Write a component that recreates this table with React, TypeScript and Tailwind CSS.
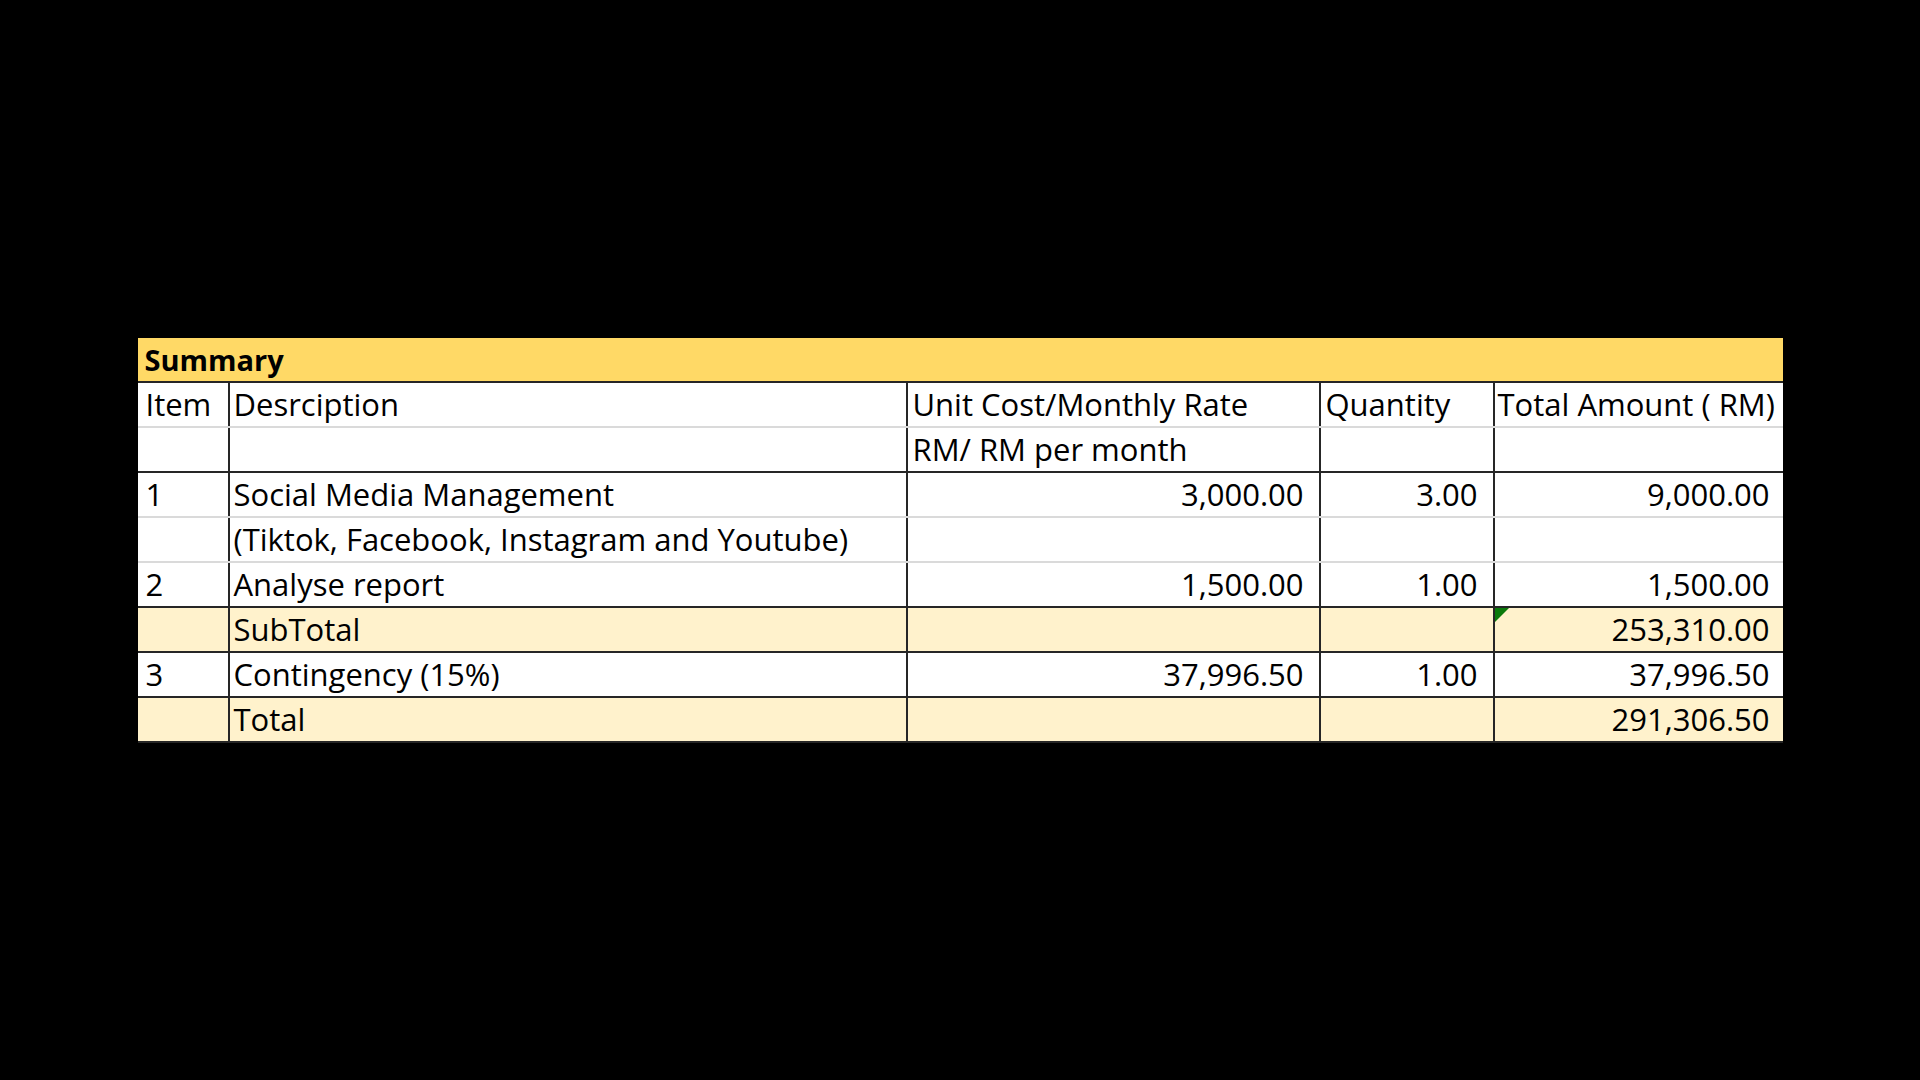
import React from 'react';

type Row = {
  item?: string;
  desc?: string;
  unit?: string;
  qty?: string;
  total?: string;
  line: 'dark' | 'light';
  tint?: boolean;
  flag?: boolean;
};

const rows: Row[] = [
  { item: 'Item', desc: 'Desrciption', unit: 'Unit Cost/Monthly Rate', qty: 'Quantity', total: 'Total Amount ( RM)', line: 'light' },
  { unit: 'RM/ RM per month', line: 'dark' },
  { item: '1', desc: 'Social Media Management', unit: '3,000.00', qty: '3.00', total: '9,000.00', line: 'light' },
  { desc: '(Tiktok, Facebook, Instagram and Youtube)', line: 'light' },
  { item: '2', desc: 'Analyse report', unit: '1,500.00', qty: '1.00', total: '1,500.00', line: 'dark' },
  { desc: 'SubTotal', total: '253,310.00', line: 'dark', tint: true, flag: true },
  { item: '3', desc: 'Contingency (15%)', unit: '37,996.50', qty: '1.00', total: '37,996.50', line: 'dark' },
  { desc: 'Total', total: '291,306.50', line: 'dark', tint: true },
];

function SheetRow({ row, header }: { row: Row; header: boolean }) {
  const rowBg = row.tint ? 'bg-[#fff2cc]' : 'bg-white';
  const rowLine = row.line === 'dark' ? 'border-[#262626]' : 'border-[#dadada]';
  // header cells left-aligned, numbers right-aligned like Excel
  const num = header ? 'pl-[5px]' : 'text-right pr-[15px]';

  return (
    <div className={`grid grid-cols-[90px_678px_413px_174px_290px] h-[45px] border-b-2 ${rowLine} ${rowBg}`}>
      <div className="pl-[8px] leading-[43px] whitespace-nowrap">{row.item}</div>
      <div className="border-l-2 border-[#262626] pl-[4px] leading-[43px] whitespace-nowrap">{row.desc}</div>
      <div className={`border-l-2 border-[#262626] leading-[43px] whitespace-nowrap ${num}`}>{row.unit}</div>
      <div className={`border-l-2 border-[#262626] leading-[43px] whitespace-nowrap ${num}`}>{row.qty}</div>
      <div className={`relative border-l-2 border-[#262626] leading-[43px] whitespace-nowrap ${header ? 'pl-[3px]' : 'text-right pr-[13px]'}`}>
        {row.flag && (
          <svg className="absolute left-0 top-0" width="14" height="14" viewBox="0 0 14 14">
            <polygon points="0,0 14,0 0,14" fill="#0b7a0b" />
          </svg>
        )}
        {row.total}
      </div>
    </div>
  );
}

export default function App() {
  return (
    <div className="w-full h-screen bg-black flex items-center justify-center">
      <div
        className="w-[1645px] text-[31px] text-black"
        style={{ fontFamily: '"Open Sans", "Noto Sans", sans-serif' }}
      >
        <div className="h-[45px] bg-[#ffd966] border-b-2 border-[#262626] pl-[7px] leading-[43px] text-[29px] font-bold">
          Summary
        </div>
        {rows.map((r, i) => (
          <SheetRow key={i} row={r} header={i < 2} />
        ))}
      </div>
    </div>
  );
}
